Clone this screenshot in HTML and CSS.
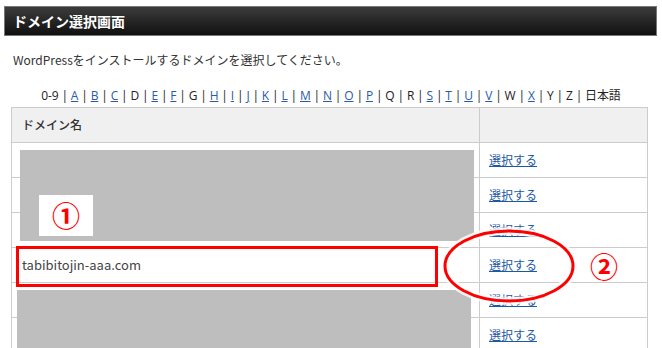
FILE: index.html
```html
<!DOCTYPE html>
<html lang="ja">
<head>
  <meta charset="UTF-8" />
  <title>ドメイン選択画面</title>
<link rel="stylesheet" href="styles.css">
</head>
<body>
  <div class="page">
    <h1 class="title-bar">ドメイン選択画面</h1>

    <p class="lead">WordPressをインストールするドメインを選択してください。</p>

    <p class="alpha">
      0-9 | <a href="#">A</a> | <a href="#">B</a> | <a href="#">C</a> | D | <a href="#">E</a> | <a href="#">F</a> | G | <a href="#">H</a> | <a href="#">I</a> | <a href="#">J</a> | <a href="#">K</a> | <a href="#">L</a> | <a href="#">M</a> | <a href="#">N</a> | <a href="#">O</a> | <a href="#">P</a> | Q | R | <a href="#">S</a> | <a href="#">T</a> | <a href="#">U</a> | <a href="#">V</a> | W | <a href="#">X</a> | Y | Z | 日本語
    </p>

    <div class="domain-list">
      <div class="row head">
        <div class="name">ドメイン名</div>
        <div class="action"></div>
      </div>
      <div class="row">
        <div class="name"></div>
        <div class="action"><a href="#">選択する</a></div>
      </div>
      <div class="row">
        <div class="name"></div>
        <div class="action"><a href="#">選択する</a></div>
      </div>
      <div class="row">
        <div class="name"></div>
        <div class="action"><a href="#">選択する</a></div>
      </div>
      <div class="row">
        <div class="name">tabibitojin-aaa.com</div>
        <div class="action"><a href="#">選択する</a></div>
      </div>
      <div class="row">
        <div class="name"></div>
        <div class="action"><a href="#">選択する</a></div>
      </div>
      <div class="row">
        <div class="name"></div>
        <div class="action"><a href="#">選択する</a></div>
      </div>
    </div>

    <!-- annotations drawn over the screenshot -->
    <div class="mask mask-top"></div>
    <div class="mask mask-bottom"></div>
    <div class="step-label step-one">①</div>
    <div class="highlight"></div>
    <svg class="ring" width="150" height="90" viewBox="0 0 150 90">
      <ellipse cx="75" cy="45" rx="64" ry="35" fill="none" stroke="#fff" stroke-width="8" opacity="0.8" />
      <ellipse cx="75" cy="45" rx="64" ry="35" fill="none" stroke="#f00" stroke-width="3" />
    </svg>
    <div class="step-label step-two">②</div>
  </div>
</body>
</html>
```

FILE: styles.css
```css
/* General Styling */
body {
  margin: 0;
  padding: 0;
  background-color: #fff;
  color: #333;
  font-family: "Noto Sans CJK JP", "Open Sans", sans-serif;
  font-size: 12px;
}

.page {
  position: relative;
  height: 348px;
  overflow: hidden;
}

.title-bar {
  margin: 6px 5px 0 4px;
  height: 28px;
  line-height: 28px;
  padding-left: 8px;
  border: 1px solid #777;
  background: linear-gradient(#3c3c3c, #101010);
  color: #fff;
  font-size: 14px;
  font-weight: bold;
}

.lead {
  margin: 15px 0 0 13px;
  line-height: 18px;
}

.alpha {
  margin: 18px 0 0 0;
  height: 18px;
  line-height: 18px;
  text-align: center;
  white-space: nowrap;
  color: #222;
  font-family: "Open Sans", "Noto Sans CJK JP", sans-serif;
  font-size: 12px;
  letter-spacing: -0.15px;
}

.alpha a {
  color: #2b5aa8;
}

.domain-list {
  margin: 2px 0 0 11px;
  width: 637px;
  box-sizing: border-box;
  border: 1px solid #ccc;
}

.row {
  display: flex;
  height: 34px;
  border-bottom: 1px solid #ccc;
}

.row.head {
  background-color: #f0f0f0;
}

.name {
  width: 468px;
  border-right: 1px solid #ccc;
  padding-left: 10px;
  box-sizing: border-box;
  line-height: 34px;
  font-size: 13px;
  color: #444;
}

.row.head .name {
  font-size: 12px;
  color: #333;
  font-weight: 500;
}

.action {
  flex: 1;
  padding-left: 9px;
  line-height: 34px;
}

.action a {
  color: #1d58a5;
}

/* Overlays */
.mask {
  position: absolute;
  background-color: #bebebe;
}

.mask-top {
  left: 20px;
  top: 150px;
  width: 454px;
  height: 91px;
}

.mask-bottom {
  left: 17px;
  top: 290px;
  width: 454px;
  height: 70px;
}

.step-label {
  position: absolute;
  color: #f00;
  font-size: 28px;
  font-weight: bold;
  line-height: 41px;
  text-align: center;
}

.step-one {
  left: 39px;
  top: 195px;
  width: 54px;
  height: 41px;
  background-color: #fff;
}

.step-two {
  left: 584px;
  top: 246px;
  width: 40px;
}

.highlight {
  position: absolute;
  left: 16px;
  top: 246px;
  width: 422px;
  height: 41px;
  box-sizing: border-box;
  border: 3px solid #f00;
}

.ring {
  position: absolute;
  left: 434px;
  top: 221px;
  filter: blur(0.3px);
}
```
